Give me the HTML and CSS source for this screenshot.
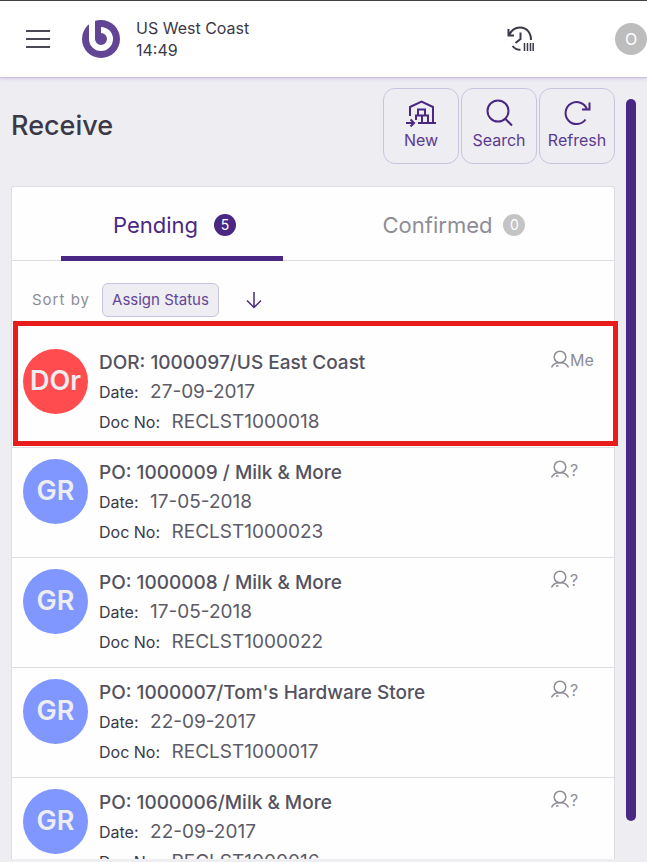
FILE: index.html
```html
<!DOCTYPE html>
<html lang="en">
<head>
    <meta charset="UTF-8" />
    <meta name="viewport" content="width=device-width, initial-scale=1.0" />
    <title>Receive</title>
    <link rel="stylesheet" href="styles.css">
</head>
<body>

    <svg width="0" height="0" class="sprite" aria-hidden="true">
        <symbol id="icon-user" viewBox="0 0 20 20">
            <circle cx="10" cy="8" r="5.8" />
            <path d="M1.5 18.500c1.200-2.700 3.400-4.300 6.200-4.800h4.600c2.800.5 5 2.100 6.200 4.800M6 17h2.500" />
        </symbol>
    </svg>

    <header class="header">
        <button class="icon-button menu-button" aria-label="Menu">
            <svg width="24" height="20" viewBox="0 0 24 20"><path d="M0 2h24M0 10h24M0 18h24" fill="none" stroke="#4b4957" stroke-width="2" /></svg>
        </button>
        <svg class="logo" width="38" height="38" viewBox="0 0 38 38">
            <circle cx="19" cy="19" r="19" fill="#624594" />
            <path d="M10 3v16a9 9 0 0 0 18 0 9 9 0 0 0-9-9" fill="none" stroke="#fff" stroke-width="6" />
            <path d="M7 0h6v4L7 7z" fill="#fff" />
        </svg>
        <div class="site">
            <div>US West Coast</div>
            <div>14:49</div>
        </div>
        <button class="icon-button history-button" aria-label="Scan history">
            <svg width="28" height="26" viewBox="0 0 28 26" fill="none" stroke="#3b3947" stroke-width="2">
                <path d="M2 9C4.500 4 8 1.500 13 1.500c6.500 0 11 5 11 12.500M1.500 3v6.500H7M13.500 6.500v6.500l-5 4M5.500 20c2 2.500 4.500 3.800 8 3.800" />
                <path d="M17.500 17v8M20.500 17v8M23.500 17v8M26.200 17v8" stroke-width="1.500" />
            </svg>
        </button>
        <div class="profile">O</div>
    </header>

    <main class="main">
        <div class="content">
            <div class="title-bar">
                <h1>Receive</h1>
                <div class="actions">
                    <button class="action">
                        <svg width="30" height="28" viewBox="0 0 30 28" fill="none" stroke="#4a2783" stroke-width="2">
                            <path d="M4 17V8L15.500 2.500 27 8v16M12 24h18M12 16.500v-6h7v6M10 21v-4.500h12V24M16 17v7M0 24h7M4.500 20.500L8 24l-3.500 3.500" />
                        </svg>
                        New
                    </button>
                    <button class="action">
                        <svg width="30" height="28" viewBox="0 0 30 28" fill="none" stroke="#4a2783" stroke-width="2">
                            <circle cx="14" cy="12" r="10.500" />
                            <path d="M21 19.500l7 7" />
                        </svg>
                        Search
                    </button>
                    <button class="action">
                        <svg width="30" height="28" viewBox="0 0 30 28" fill="none" stroke="#4a2783" stroke-width="2">
                            <path d="M23.500 20.500A11 11 0 1 1 25 10.500M27.500 3.500v7h-7.500" />
                        </svg>
                        Refresh
                    </button>
                </div>
            </div>

            <div class="card">
                <div class="tabs" role="tablist">
                    <button class="tab active" role="tab">Pending <span class="count">5</span></button>
                    <button class="tab" role="tab">Confirmed <span class="count">0</span></button>
                </div>

                <div class="sort">
                    <span class="sort-label">Sort by</span>
                    <button class="sort-field">Assign Status</button>
                    <button class="icon-button" aria-label="Sort descending">
                        <svg width="16" height="18" viewBox="0 0 16 18"><path d="M8 1v15M1 9.500L8 16.500l7-7" fill="none" stroke="#4a2783" stroke-width="1.500" /></svg>
                    </button>
                </div>

                <ul class="list">
                    <li class="item highlighted">
                        <div class="avatar order">DOr</div>
                        <div class="details">
                            <div class="name">DOR: 1000097/US East Coast</div>
                            <div class="field">Date: <span>27-09-2017</span></div>
                            <div class="field">Doc No: <span>RECLST1000018</span></div>
                        </div>
                        <div class="assignee"><svg width="20" height="20"><use href="#icon-user" /></svg>Me</div>
                    </li>
                    <li class="item">
                        <div class="avatar">GR</div>
                        <div class="details">
                            <div class="name">PO: 1000009 / Milk &amp; More</div>
                            <div class="field">Date: <span>17-05-2018</span></div>
                            <div class="field">Doc No: <span>RECLST1000023</span></div>
                        </div>
                        <div class="assignee"><svg width="20" height="20"><use href="#icon-user" /></svg>?</div>
                    </li>
                    <li class="item">
                        <div class="avatar">GR</div>
                        <div class="details">
                            <div class="name">PO: 1000008 / Milk &amp; More</div>
                            <div class="field">Date: <span>17-05-2018</span></div>
                            <div class="field">Doc No: <span>RECLST1000022</span></div>
                        </div>
                        <div class="assignee"><svg width="20" height="20"><use href="#icon-user" /></svg>?</div>
                    </li>
                    <li class="item">
                        <div class="avatar">GR</div>
                        <div class="details">
                            <div class="name">PO: 1000007/Tom's Hardware Store</div>
                            <div class="field">Date: <span>22-09-2017</span></div>
                            <div class="field">Doc No: <span>RECLST1000017</span></div>
                        </div>
                        <div class="assignee"><svg width="20" height="20"><use href="#icon-user" /></svg>?</div>
                    </li>
                    <li class="item">
                        <div class="avatar">GR</div>
                        <div class="details">
                            <div class="name">PO: 1000006/Milk &amp; More</div>
                            <div class="field">Date: <span>22-09-2017</span></div>
                            <div class="field">Doc No: <span>RECLST1000016</span></div>
                        </div>
                        <div class="assignee"><svg width="20" height="20"><use href="#icon-user" /></svg>?</div>
                    </li>
                </ul>
            </div>
        </div>
        <div class="scrollbar"></div>
    </main>

</body>
</html>
```

FILE: styles.css
```css
* {
    box-sizing: border-box;
}

body {
    font-family: Inter, sans-serif;
    margin: 0;
    height: 100vh;
    display: flex;
    flex-direction: column;
    overflow: hidden;
    background-color: #eeedf2;
    color: #3b3947;
}

button {
    font-family: inherit;
    cursor: pointer;
}

.sprite {
    position: absolute;
}

.icon-button {
    display: flex;
    padding: 0;
    border: none;
    background: none;
}

.header {
    display: flex;
    align-items: center;
    flex-shrink: 0;
    height: 78px;
    padding-left: 26px;
    border-top: 1px solid #444;
    border-bottom: 1px solid #c9bfe6;
    background-color: #fff;
    box-shadow: 0 1px 4px #d3cbea;
}

.logo {
    margin: 0 16px 0 32px;
}

.site {
    font-size: 16px;
    line-height: 22px;
}

.history-button {
    margin-left: auto;
    margin-right: 80px;
}

.profile {
    width: 32px;
    height: 32px;
    border-radius: 50%;
    background-color: #bdbdbd;
    color: #fff;
    font-size: 16px;
    line-height: 32px;
    text-align: center;
}

.main {
    display: flex;
    flex: 1;
    min-height: 0;
    gap: 11px;
    padding: 10px 11px 3px;
}

.content {
    display: flex;
    flex: 1;
    flex-direction: column;
    min-width: 0;
}

.scrollbar {
    width: 10px;
    margin: 11px 0 38px;
    border-radius: 5px;
    background-color: #4a2783;
}

.title-bar {
    display: flex;
    justify-content: space-between;
    margin-bottom: 22px;
}

.title-bar h1 {
    margin: 0;
    font-size: 27px;
    font-weight: 500;
    line-height: 76px;
}

.actions {
    display: flex;
    gap: 2px;
}

.action {
    display: flex;
    flex-direction: column;
    align-items: center;
    gap: 3px;
    width: 76px;
    height: 76px;
    padding: 10px 0 0;
    border: 1px solid #c9c4de;
    border-radius: 12px;
    background: none;
    color: #5b3a91;
    font-size: 16px;
    line-height: 20px;
}

.card {
    display: flex;
    flex: 1;
    flex-direction: column;
    min-height: 0;
    border: 1px solid #dddde2;
    border-bottom: none;
    border-radius: 3px 3px 0 0;
    background-color: #fefefe;
}

.tabs {
    display: flex;
    justify-content: space-between;
    flex-shrink: 0;
    height: 74px;
    padding: 0 49px;
    border-bottom: 1px solid #dddde2;
}

.tab {
    display: flex;
    align-items: center;
    justify-content: center;
    gap: 11px;
    width: 222px;
    height: 74px;
    padding: 6px 0 0;
    border: none;
    border-bottom: 5px solid transparent;
    border-radius: 4px 4px 0 0;
    background: none;
    color: #8e8d96;
    font-size: 22px;
}

.tab.active {
    gap: 16px;
    padding-left: 5px;
    background: linear-gradient(#4a2783, #4a2783) bottom / 100% 5px no-repeat border-box;
    color: #4a2783;
}

.count {
    width: 22px;
    height: 22px;
    border-radius: 50%;
    background-color: #c4c4c4;
    color: #fff;
    font-size: 14px;
    line-height: 22px;
}

.tab.active .count {
    background-color: #4a2783;
}

.sort {
    display: flex;
    align-items: center;
    flex-shrink: 0;
    height: 77px;
    padding-left: 20px;
}

.sort-label {
    margin-right: 12px;
    color: #8e8d96;
    font-size: 15px;
    letter-spacing: 1px;
}

.sort-field {
    width: 117px;
    height: 34px;
    margin-right: 27px;
    padding: 0;
    border: 1px solid #c9c4de;
    border-radius: 6px;
    background-color: #eeedf2;
    color: #644697;
    font-size: 15px;
}

.list {
    flex: 1;
    min-height: 0;
    margin: 0;
    padding: 0;
    list-style: none;
    /* the frame round the first item reaches past the card's right edge */
    clip-path: inset(-20px -10px 0 -10px);
}

.item {
    display: flex;
    position: relative;
    height: 110px;
    padding: 11px 18px 0 11px;
    border-bottom: 1px solid #dddde2;
}

.item.highlighted::after {
    content: "";
    position: absolute;
    top: -17px;
    right: -4px;
    bottom: 1px;
    left: 1px;
    border: 5px solid #e91c1c;
}

.avatar {
    width: 65px;
    height: 65px;
    border-radius: 50%;
    background-color: #7f97ff;
    color: #eeedf2;
    font-size: 27px;
    font-weight: 600;
    line-height: 64px;
    text-align: center;
}

.avatar.order {
    background-color: #ff4d4f;
}

.details {
    flex: 1;
    padding-left: 11px;
}

.name {
    color: #54525f;
    font-size: 19px;
    font-weight: 500;
    line-height: 28px;
}

.field {
    font-size: 16px;
    line-height: 30px;
}

.field span {
    margin-left: 7px;
    color: #5d5b67;
    font-size: 19px;
}

.assignee {
    display: flex;
    width: 46px;
    color: #8e8d96;
    font-size: 16px;
    line-height: 22px;
}

.assignee svg {
    fill: none;
    stroke: #8e8d96;
    stroke-width: 1.5px;
}
```
